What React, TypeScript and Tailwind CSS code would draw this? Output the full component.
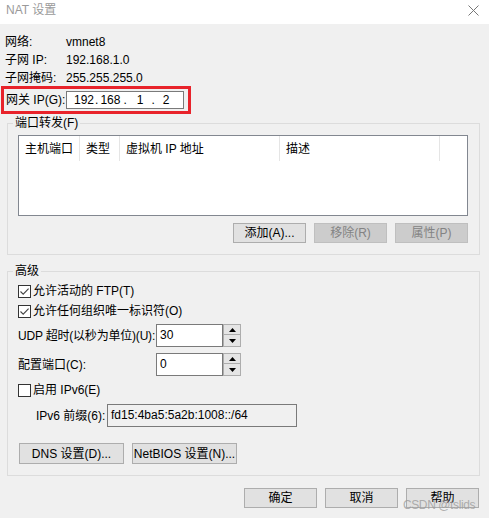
import React from 'react';

const btnOn =
  'h-[20px] w-[73px] border border-[#adadad] bg-[#e1e1e1] text-black flex items-center justify-center whitespace-nowrap';
const btnOff =
  'h-[20px] w-[73px] border border-[#bfbfbf] bg-[#cccccc] text-[#838383] flex items-center justify-center whitespace-nowrap';

function Check({ checked }: { checked: boolean }) {
  return (
    <span className="w-[13px] h-[13px] border border-[#333333] bg-white flex items-center justify-center shrink-0">
      {checked && (
        <svg width="11" height="11" viewBox="0 0 11 11">
          <path d="M1.5 5.5 L4.2 8.2 L9.6 2.6" fill="none" stroke="#444444" strokeWidth="1.1" />
        </svg>
      )}
    </span>
  );
}

function Arrow({ up }: { up: boolean }) {
  return (
    <svg width="7" height="4" viewBox="0 0 7 4">
      <path d={up ? 'M0 4 L3.5 0 L7 4 Z' : 'M0 0 L3.5 4 L7 0 Z'} fill="#000000" />
    </svg>
  );
}

function Spin({ value }: { value: string }) {
  return (
    <div className="flex h-[23px]">
      <div className="w-[67px] h-full border border-[#7a7a7a] bg-white pl-[3px] pt-[3px]">{value}</div>
      <div className="w-[18px] h-full flex flex-col">
        <div className="h-[11px] border border-[#adadad] bg-[#e5e5e5] flex items-center justify-center">
          <Arrow up />
        </div>
        <div className="h-[12px] border border-t-0 border-[#adadad] bg-[#e5e5e5] flex items-center justify-center">
          <Arrow up={false} />
        </div>
      </div>
    </div>
  );
}

const infoRows = [
  ['网络:', 'vmnet8'],
  ['子网 IP:', '192.168.1.0'],
  ['子网掩码:', '255.255.255.0'],
];

const columns = [
  { label: '主机端口', w: 'w-[61px]' },
  { label: '类型', w: 'w-[40px]' },
  { label: '虚拟机 IP 地址', w: 'w-[160px]' },
  { label: '描述', w: 'w-[160px]' },
];

export default function App() {
  return (
    <div className="relative w-[489px] h-[518px] bg-[#f0f0f0] text-black text-[12px] leading-[14px] whitespace-nowrap font-[family-name:Liberation_Sans,Noto_Sans_CJK_SC,sans-serif] overflow-hidden">
      {/* Title bar */}
      <div className="h-[24px] bg-white flex items-center justify-between pl-[6px] pr-[10px]">
        <span className="text-[#9a9a9a] -mt-[4px]">NAT 设置</span>
        <svg width="11" height="11" viewBox="0 0 11 11" className="-mt-[4px]">
          <path d="M0.5 0.5 L10.5 10.5 M10.5 0.5 L0.5 10.5" stroke="#777777" strokeWidth="1" />
        </svg>
      </div>

      {/* Network info */}
      <div className="mt-[9px] pl-[5px]">
        {infoRows.map(([label, value]) => (
          <div key={label} className="h-[18px] flex items-center">
            <span className="w-[61px]">{label}</span>
            <span>{value}</span>
          </div>
        ))}
      </div>

      {/* Gateway, highlighted */}
      <div className="-mt-[1px] ml-[1px] w-[190px] h-[28px] border-[3px] border-[#e8232b] flex items-center pl-[2px]">
        <span className="w-[60px]">网关 IP(G):</span>
        <div className="w-[118px] h-[18px] border border-[#7a7a7a] bg-white flex items-center pl-[7px]">
          <span>192</span>
          <span className="ml-[1px]">.</span>
          <span className="ml-[2px]">168</span>
          <span className="ml-[3px]">.</span>
          <span className="ml-[10px]">1</span>
          <span className="ml-[8px]">.</span>
          <span className="ml-[8px]">2</span>
        </div>
      </div>

      {/* Port forwarding */}
      <fieldset className="mt-[2px] ml-[7px] w-[473px] border border-[#dcdcdc] pb-[11px]">
        <legend className="ml-[5px] px-[2px] leading-[14px]">端口转发(F)</legend>
        <div className="mt-[5px] ml-[10px] w-[450px] h-[81px] border border-[#828790] bg-white">
          <div className="h-[25px] flex">
            {columns.map((c) => (
              <div key={c.label} className={`${c.w} h-full border-r border-[#e5e5e5] flex items-center pl-[6px]`}>
                {c.label}
              </div>
            ))}
          </div>
        </div>
        <div className="mt-[7px] ml-[10px] w-[450px] flex justify-end gap-[8px]">
          <button className={btnOn}>添加(A)...</button>
          <button className={btnOff}>移除(R)</button>
          <button className={btnOff}>属性(P)</button>
        </div>
      </fieldset>

      {/* Advanced */}
      <fieldset className="mt-[9px] ml-[7px] w-[473px] border border-[#dcdcdc] pb-[11px]">
        <legend className="ml-[5px] px-[2px] leading-[14px]">高级</legend>
        <div className="pt-[3px] pl-[10px]">
          <label className="h-[20px] flex items-center gap-[2px]">
            <Check checked />
            <span>允许活动的 FTP(T)</span>
          </label>
          <label className="h-[20px] flex items-center gap-[2px]">
            <Check checked />
            <span>允许任何组织唯一标识符(O)</span>
          </label>
          <div className="mt-[3px] flex items-center">
            <span className="w-[138px] tracking-[-0.2px]">UDP 超时(以秒为单位)(U):</span>
            <Spin value="30" />
          </div>
          <div className="mt-[6px] flex items-center">
            <span className="w-[138px]">配置端口(C):</span>
            <Spin value="0" />
          </div>
          <label className="mt-[5px] h-[18px] flex items-center gap-[2px]">
            <Check checked={false} />
            <span>启用 IPv6(E)</span>
          </label>
          <div className="mt-[5px] flex items-center pl-[18px]">
            <span className="w-[71px]">IPv6 前缀(6):</span>
            <div className="w-[190px] h-[23px] border border-[#7a7a7a] bg-[#f0f0f0] pl-[3px] pt-[3px]">
              fd15:4ba5:5a2b:1008::/64
            </div>
          </div>
          <div className="mt-[16px] ml-[1px] flex gap-[8px]">
            <button className="h-[21px] w-[105px] border border-[#adadad] bg-[#e1e1e1] flex items-center justify-center">
              DNS 设置(D)...
            </button>
            <button className="h-[21px] w-[105px] border border-[#adadad] bg-[#e1e1e1] flex items-center justify-center">
              NetBIOS 设置(N)...
            </button>
          </div>
        </div>
      </fieldset>

      {/* Dialog buttons */}
      <div className="mt-[12px] pr-[10px] flex justify-end gap-[8px]">
        <button className={btnOn}>确定</button>
        <button className={btnOn}>取消</button>
        <button className={btnOn}>帮助</button>
      </div>

      {/* Watermark */}
      <span className="absolute left-[403px] top-[498px] text-[12px] tracking-[-0.4px] text-[#9c9c9c]/80">
        CSDN @tslids
      </span>
    </div>
  );
}
